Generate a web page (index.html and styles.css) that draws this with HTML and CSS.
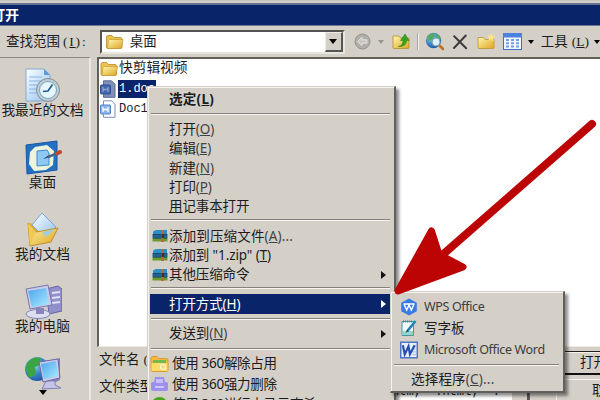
FILE: index.html
```html
<!DOCTYPE html>
<html lang="zh-CN">
<head>
    <meta charset="UTF-8">
    <title>打开</title>
    <link rel="stylesheet" href="styles.css">
</head>
<body>
    <svg class="defs" width="0" height="0">
        <defs>
            <linearGradient id="gold" x1="0" y1="0" x2="1" y2="1">
                <stop offset="0" stop-color="#fff7b0"/>
                <stop offset="1" stop-color="#dfa51e"/>
            </linearGradient>
            <linearGradient id="screen" x1="0" y1="0" x2="1" y2="1">
                <stop offset="0" stop-color="#4ba5ec"/>
                <stop offset="1" stop-color="#aaeaff"/>
            </linearGradient>
            <linearGradient id="paper" x1="0" y1="0" x2="1" y2="1">
                <stop offset="0" stop-color="#ffffff"/>
                <stop offset="1" stop-color="#8fc0ee"/>
            </linearGradient>
            <radialGradient id="earth" cx=".35" cy=".3" r=".8">
                <stop offset="0" stop-color="#a9e6d8"/>
                <stop offset=".5" stop-color="#3e8bd0"/>
                <stop offset="1" stop-color="#174a9c"/>
            </radialGradient>
        </defs>
        <symbol id="folder" viewBox="0 0 18 16">
            <path d="M1 13V3q0-1.500 1.500-1.500h4L8.500 3.500H15q1.500 0 1.500 1.500v8q0 1.500-1.500 1.500H2.500Q1 14.500 1 13z" fill="#eec34a" stroke="#b48a2c" stroke-width=".8"/>
            <path d="M3 6.500Q3.200 5.500 4.500 5.500h13L16 13.500q-.2 1-1.500 1H2z" fill="url(#gold)" stroke="#c59a33" stroke-width=".7"/>
        </symbol>
        <symbol id="doc" viewBox="0 0 16 18">
            <path d="M3.500.8h8L15 4.300v13H3.500z" fill="#fff" stroke="#7d90b8"/>
            <rect x=".5" y="5" width="10" height="9" rx="1" fill="#8db5ee" stroke="#4f82cf"/>
            <path d="M3 7v5M8 7v5M3 9.500h5" stroke="#fff" stroke-width="1.300" fill="none"/>
        </symbol>
        <symbol id="doc-selected" viewBox="0 0 16 18">
            <path d="M3.500.8h8L15 4.300v13H3.500z" fill="#8090b8" stroke="#5a6b98"/>
            <rect x=".5" y="5" width="10" height="9" rx="1" fill="#4666ad" stroke="#2f4f9a"/>
            <path d="M3 7v5M8 7v5M3 9.500h5" stroke="#8fa3d0" stroke-width="1.300" fill="none"/>
        </symbol>
        <symbol id="archive" viewBox="0 0 16 14">
            <path d="M1 2.500L4 1h11v4H1z" fill="#2b8fc4"/>
            <path d="M.5 5h15v4H.5z" fill="#25608f"/>
            <path d="M.5 9h15v3.500H.5z" fill="#6b9b2c"/>
            <path d="M1 5.500h14M1 9.300h14" stroke="#164566" stroke-width=".8"/>
            <path d="M9 1h3v12H9z" fill="#b56a38"/>
            <path d="M9.500 5h2.500v4H9.500z" fill="#4a2d20"/>
        </symbol>
    </svg>

    <div class="window">
        <div class="titlebar">打开</div>

        <div class="toolbar">
            <span class="look-in">查找范围<span class="key">(<u>I</u>):</span></span>
            <div class="combo">
                <svg width="19" height="16"><use href="#folder"/></svg>
                <span class="combo-text">桌面</span>
                <span class="combo-button"><i class="down"></i></span>
            </div>
            <div class="tools">
                <svg class="back" width="17" height="17" viewBox="0 0 17 17">
                    <circle cx="8.500" cy="8.500" r="7.500" fill="#b0aeaa" stroke="#95938f"/>
                    <path d="M3.500 8.500L8 4.300v2.500h5v3.400H8v2.500z" fill="#c8c5bf" stroke="#f0eee9" stroke-width=".8"/>
                </svg>
                <i class="down small grey"></i>
                <svg class="up" width="18" height="17" viewBox="0 0 18 17">
                    <path d="M1 14.500V3h6l1.500 2H17v9.500q0 1-1 1H2q-1 0-1-1z" fill="url(#gold)" stroke="#b68a28" stroke-width=".8"/>
                    <path d="M6 13.500q5-.5 5-6H8.500L13 1l4 6.500h-2.500q0 6.500-8.500 6z" fill="#34a322" stroke="#23801a" stroke-width=".5"/>
                </svg>
                <i class="divider"></i>
                <svg class="globe" width="20" height="19" viewBox="0 0 20 19">
                    <circle cx="8.500" cy="8.500" r="7.700" fill="url(#earth)"/>
                    <path d="M2 5q3-4.500 7-4l1 3-3 4-4 1zM12 2q3 1 4 5l-3 1-2-3z" fill="#54a968"/>
                    <path d="M14 13l4 4" stroke="#b8722e" stroke-width="2.600" stroke-linecap="round"/>
                    <circle cx="11" cy="10" r="4" fill="#d8f1fb" stroke="#7796ad" stroke-width="1.200"/>
                </svg>
                <svg class="delete" width="16" height="16" viewBox="0 0 16 16">
                    <path d="M2.200 2.200l12 12M13.800 1.500L2 14" stroke="#3d3d3d" stroke-width="2" fill="none" stroke-linecap="round"/>
                </svg>
                <svg class="new-folder" width="19" height="17" viewBox="0 0 19 17">
                    <path d="M1 14.500V4.500h5.500L8 6.500h9v8q0 1-1 1H2q-1 0-1-1z" fill="url(#gold)" stroke="#c0932c" stroke-width=".8"/>
                    <path d="M14.500 0l1 3 3.200.6-2.600 1.600.4 3.300-2.200-2-3 1.200 1-3-2-2.300 3.200.2z" fill="#ffe67c"/>
                </svg>
                <svg class="views" width="19" height="17" viewBox="0 0 19 17">
                    <rect x=".5" y=".5" width="18" height="16" fill="#f3f8ff" stroke="#3e6dc2"/>
                    <path d="M0 0h19v4.500H0z" fill="#4b82dd"/>
                    <path d="M3 7h3M8 7h3M13 7h3M3 10.300h3M8 10.300h3M13 10.300h3M3 13.600h3M8 13.600h3M13 13.600h3" stroke="#73a0e4" stroke-width="2"/>
                </svg>
                <i class="down small"></i>
                <span class="tool-text">工具<span class="key">(<u>L</u>)</span></span>
                <i class="down small"></i>
            </div>
        </div>

        <div class="main">
            <div class="places">
                <div class="place">
                    <svg width="38" height="36" viewBox="0 0 38 36">
                        <path d="M2 1h18l6 6v26H2z" fill="url(#paper)" stroke="#84abd4"/>
                        <path d="M20 1v6h6" fill="#5b9bdb"/>
                        <path d="M5 9h13M5 13h13M5 17h10M5 21h8M5 25h7" stroke="#86b5e6"/>
                        <circle cx="24" cy="22" r="11.500" fill="#c3cad0" stroke="#818e98"/>
                        <circle cx="24" cy="22" r="8.500" fill="#e5f6fc" stroke="#72a8c6"/>
                        <path d="M28.500 16.500L24 23l-5 .5" stroke="#1f5d87" stroke-width="1.700" fill="none"/>
                    </svg>
                    <span>我最近的文档</span>
                </div>
                <div class="place">
                    <svg width="38" height="36" viewBox="0 0 38 36">
                        <path d="M2 5l31-4v29L3 34z" fill="#2370c2" stroke="#1758a2"/>
                        <path d="M11 7l12-2 7 6-1 14-7 5-12 1-5-7 1-12z" fill="#eef4dc"/>
                        <path d="M13 11l10-1 2 3v12l-12 1z" fill="#8fc8f3" stroke="#3e8bce"/>
                        <path d="M19 19l6-4 2 2z" fill="#274a73"/>
                        <path d="M24 17l10-4" stroke="#46658f" stroke-width="2.500"/>
                        <path d="M33 13.500l3-1.500" stroke="#ba4930" stroke-width="4" stroke-linecap="round"/>
                    </svg>
                    <span>桌面</span>
                </div>
                <div class="place">
                    <svg width="38" height="36" viewBox="0 0 38 36">
                        <path d="M4 11l8 1 8-5 12 8-4 13L6 34z" fill="#e2ad36"/>
                        <path d="M18 1l14 14-12 10L8 13z" fill="url(#paper)" stroke="#7ca9d1"/>
                        <path d="M4 11l8 9 22-4-7 14-21 4z" fill="url(#gold)" stroke="#c18f28"/>
                        <path d="M4 11l2 23 6-14z" fill="#f4c957"/>
                        <path d="M18 20l13-3-9 8z" fill="#9ecdde"/>
                    </svg>
                    <span>我的文档</span>
                </div>
                <div class="place">
                    <svg width="38" height="36" viewBox="0 0 38 36">
                        <path d="M22 5l12-3 4 3v22l-13 3z" fill="#9290c9" stroke="#6765a2"/>
                        <path d="M28 9l8-1M28 14l8-1M28 19l8-1" stroke="#e3e2fb" stroke-width="2"/>
                        <ellipse cx="14" cy="30" rx="12" ry="4.500" fill="#dddff1" stroke="#8284b6"/>
                        <path d="M12 24h8v6h-8z" fill="#8885bd"/>
                        <path d="M2 5l22-4 4 20-22 4z" fill="#cacae9" stroke="#7877b3"/>
                        <path d="M4 7l18-3 3 16-17 3z" fill="url(#screen)"/>
                    </svg>
                    <span>我的电脑</span>
                </div>
                <div class="place">
                    <svg width="38" height="34" viewBox="0 0 38 34">
                        <circle cx="13" cy="13" r="12" fill="url(#earth)"/>
                        <path d="M3 7Q9 0 17 2l-1 7-5 2 1 7-6 4Q0 16 3 7z" fill="#3ba545"/>
                        <path d="M28 4l8-2v22l-8 4z" fill="#8583bc"/>
                        <path d="M22 25h9v4l6 3-19 1z" fill="#c5c6e6" stroke="#8281b4"/>
                        <path d="M15 6l19-3 2 19-17 4z" fill="#cacae9" stroke="#6867a1"/>
                        <path d="M17 8l15-3 2 15-14 3z" fill="url(#screen)"/>
                    </svg>
                </div>
                <i class="down places-more"></i>
            </div>

            <div class="content">
                <div class="files">
                    <div class="file"><svg width="18" height="16"><use href="#folder"/></svg><span>快剪辑视频</span></div>
                    <div class="file selected"><svg width="16" height="18"><use href="#doc-selected"/></svg><span>1.doc</span></div>
                    <div class="file"><svg width="16" height="18"><use href="#doc"/></svg><span>Doc1</span></div>
                </div>
                <div class="fields">
                    <div class="labels">
                        <span>文件名<span class="key"> (</span></span>
                        <span>文件类型</span>
                    </div>
                    <div class="inputs">
                        <div class="input"></div>
                        <div class="input types">*.htm; *.html; *.<b></b></div>
                    </div>
                    <div class="buttons">
                        <div class="button default">打开</div>
                        <div class="button">取消</div>
                    </div>
                </div>
            </div>
        </div>
    </div>

    <div class="menu context">
        <div class="item bold">选定(<u>L</u>)</div>
        <hr>
        <div class="item">打开<span class="hot">(<u>O</u>)</span></div>
        <div class="item">编辑<span class="hot">(<u>E</u>)</span></div>
        <div class="item">新建<span class="hot">(<u>N</u>)</span></div>
        <div class="item">打印<span class="hot">(<u>P</u>)</span></div>
        <div class="item"><u>用</u>记事本打开</div>
        <hr>
        <div class="item wide"><svg width="16" height="14"><use href="#archive"/></svg>添加到压缩文件<span class="hot">(<u>A</u>)...</span></div>
        <div class="item"><svg width="16" height="14"><use href="#archive"/></svg>添加到 "1.zip" (<u>T</u>)</div>
        <div class="item"><svg width="16" height="14"><use href="#archive"/></svg>其他压缩命令<i class="more"></i></div>
        <hr>
        <div class="item active">打开方式(<u>H</u>)<i class="more"></i></div>
        <hr class="tight">
        <div class="item send">发送到<span class="hot">(<u>N</u>)</span><i class="more"></i></div>
        <hr class="tight">
        <div class="item tall">
            <svg width="19" height="18" viewBox="0 0 19 18">
                <path d="M1 15V3q0-1.500 1.500-1.500H7l2 2h7.500Q18 3.500 18 5v10q0 1.500-1.500 1.500h-14Q1 16.500 1 15z" fill="#f2b840" stroke="#dc9b2c"/>
                <path d="M3 5h13v4H3z" fill="#79b84a"/>
                <path d="M1.500 8h16v8h-16z" fill="#ffdb69"/>
                <circle cx="13" cy="12" r="2.500" fill="none" stroke="#fff8d8" stroke-width="1.200"/>
            </svg>使用 360解除占用
        </div>
        <div class="item tall">
            <svg width="19" height="16" viewBox="0 0 19 16">
                <path d="M5 1h9l1 5h1.500q1.500 0 1.500 1.500V13q0 2-2 2H3q-2 0-2-2V7.500Q1 6 2.500 6H4z" fill="#9b91ec"/>
                <path d="M6 3h7v4H6z" fill="#c5bffc"/>
                <path d="M5 11h9" stroke="#ded9ff" stroke-width="1.500"/>
            </svg>使用 360强力删除
        </div>
        <div class="item tall">
            <svg width="19" height="18" viewBox="0 0 19 18">
                <circle cx="9.500" cy="9" r="8" fill="#45a51c"/>
                <path d="M3 8q6-6 13-2-6-1-9 3z" fill="#f3dd33"/>
            </svg>使用 360进行木马云查杀
        </div>
    </div>

    <div class="menu submenu">
        <div class="item">
            <svg width="18" height="18" viewBox="0 0 18 18">
                <path d="M9 .5l7.800 4.200v8.600L9 17.500 1.200 13.300V4.700z" fill="#397be3"/>
                <path d="M3.500 6h11M4 6.300l2.700 5.700L9 7l2.300 5L14 6.300" fill="none" stroke="#fff" stroke-width="1.400"/>
            </svg><span class="latin">WPS Office</span>
        </div>
        <div class="item">
            <svg width="18" height="18" viewBox="0 0 18 18">
                <path d="M2 2.500h11.500v14H2z" fill="#eefafa" stroke="#4795a6"/>
                <path d="M3 12h10v4H3z" fill="#94d6cb"/>
                <path d="M3 2.500h10" stroke="#537889" stroke-width="2" stroke-dasharray="1 1"/>
                <path d="M15.500 2L7 12.500" stroke="#267eb4" stroke-width="2.500"/>
                <path d="M7.500 10.500L5.500 14l3.300-2z" fill="#345"/>
            </svg>写字板
        </div>
        <div class="item">
            <svg width="19" height="18" viewBox="0 0 19 18">
                <rect x=".8" y=".8" width="17.400" height="16.400" fill="#e8effb" stroke="#4770c3" stroke-width="1.500"/>
                <path d="M13 5h4M13 8h4M13 11h4M13 14h4" stroke="#9eb8e2"/>
                <path d="M3 4l2 9.500L9 5l1.500 8.500L15.500 4" fill="none" stroke="#2850aa" stroke-width="2.300"/>
            </svg><span class="latin">Microsoft Office Word</span>
        </div>
        <hr>
        <div class="item choose">选择程序<span class="hot">(<u>C</u>)...</span></div>
    </div>

    <svg class="arrow" width="210" height="190" viewBox="0 0 210 190">
        <path d="M202 14L50 147" stroke="#bd0405" stroke-width="8" stroke-linecap="round"/>
        <path d="M8 181L41.500 121 49 144.500 73 157z" fill="#bd0405" stroke="#bd0405" stroke-width="7" stroke-linejoin="round"/>
    </svg>
</body>
</html>
```
FILE: styles.css
```css
body {
    margin: 0;
    width: 600px;
    height: 400px;
    overflow: hidden;
    position: relative;
    background: #d4d0c8;
    color: #1c1c1c;
    font-family: "Liberation Sans", "Noto Sans CJK SC", sans-serif;
    font-size: 13.5px;
    line-height: 20px;
    white-space: nowrap;
}
svg {
    flex: none;
}
.defs {
    position: absolute;
}
u {
    text-underline-offset: 1px;
    text-decoration-thickness: 1px;
}
.window {
    width: 600px;
    height: 400px;
    box-sizing: border-box;
    padding-top: 2px;
    border-top: 1px solid #c8c5be;
    display: flex;
    flex-direction: column;
    overflow: hidden;
}
.titlebar {
    height: 20px;
    flex: none;
    border-top: 2px solid #667294;
    border-bottom: 1px solid #6d7898;
    background: #0a246a;
    color: #fff;
    font-weight: bold;
    font-size: 14px;
    line-height: 20px;
    text-indent: -9px;
}
.toolbar {
    height: 31px;
    flex: none;
    display: flex;
    align-items: center;
    padding-left: 6px;
}
.look-in {
    width: 94px;
}
.key {
    font-family: "Liberation Serif", serif;
    letter-spacing: 0.5px;
}
.look-in .key {
    margin-left: 3px;
    letter-spacing: 1.8px;
}
.combo {
    width: 246px;
    height: 24px;
    box-sizing: border-box;
    border: 2px solid #55534f;
    border-right-color: #e8e5df;
    border-bottom-color: #e8e5df;
    background: #fff;
    display: flex;
    align-items: center;
    padding-left: 3px;
}
.combo-text {
    flex: 1;
    margin-left: 6px;
}
.combo-button {
    width: 15px;
    height: 17px;
    background: #d4d0c8;
    border: 1px solid #eeebe5;
    border-right: 2px solid #555;
    border-bottom: 2px solid #555;
    display: flex;
    align-items: center;
    justify-content: center;
}
.down {
    border: 4px solid transparent;
    border-top: 5px solid #000;
    border-bottom: 0;
}
.down.small {
    border-width: 4px 3px 0;
}
.down.grey {
    border-top-color: #969490;
}
.tools {
    display: flex;
    align-items: center;
    margin-left: 9px;
}
.back {
    margin-right: 7px;
}
.up {
    margin-left: 8px;
}
.divider {
    width: 1px;
    height: 17px;
    background: #aaa8a3;
    border-right: 1px solid #f2f0eb;
    margin: 0 6px 0 7px;
}
.delete {
    margin-left: 7px;
}
.new-folder {
    margin-left: 9px;
}
.views {
    margin: 0 6px 0 7px;
}
.tool-text {
    margin: 0 5px 0 7px;
}
.tool-text .key {
    margin-left: 4px;
    letter-spacing: 0;
}
.main {
    flex: 1;
    display: flex;
    min-height: 0;
}
.places {
    width: 91px;
    flex: none;
    box-sizing: border-box;
    border-top: 1px solid #8c8982;
    border-right: 2px solid #ece9e3;
    padding: 10px 4px 0 0;
    display: flex;
    flex-direction: column;
    align-items: center;
    position: relative;
}
.place {
    width: 84px;
    height: 72px;
    flex: none;
    display: flex;
    flex-direction: column;
    align-items: center;
}
.place svg {
    margin-bottom: -3px;
}
.place span {
    font-size: 13.7px;
}
.places-more {
    position: absolute;
    left: 39px;
    bottom: 5px;
}
.content {
    flex: 1;
    min-width: 0;
    margin-left: 6px;
}
.files {
    height: 290px;
    box-sizing: border-box;
    border-top: 2px solid #62605b;
    border-left: 2px solid #62605b;
    border-bottom: 1px solid #eeebe5;
    background: #fff;
    padding-left: 1px;
}
.file {
    height: 20px;
    display: flex;
    align-items: center;
}
.file span {
    font-family: "Liberation Mono", "Noto Sans CJK SC", monospace;
    font-size: 12px;
    margin-left: 3px;
}
.file:first-child span {
    font-size: 13.7px;
    margin-left: 1px;
}
.selected span {
    height: 18px;
    line-height: 18px;
    width: 37px;
    margin-left: 2px;
    padding-left: 1px;
    background: #0a246a;
    color: #fff;
    overflow: hidden;
}
.fields {
    display: flex;
    padding-left: 2px;
}
.labels {
    width: 100px;
    flex: none;
    padding-top: 3px;
    display: flex;
    flex-direction: column;
    gap: 7px;
}
.inputs {
    width: 331px;
    flex: none;
    padding-top: 8px;
}
.input {
    height: 20px;
    background: #fff;
    border: 1px solid #666;
    margin-bottom: 5px;
}
.input.types {
    display: flex;
    justify-content: flex-end;
    font-family: "Liberation Mono", monospace;
    font-size: 12px;
    line-height: 18px;
}
.input b {
    width: 15px;
    height: 17px;
    margin-left: 12px;
    background: #d4d0c8;
    border-right: 2px solid #555;
    border-bottom: 2px solid #555;
}
.buttons {
    flex: none;
    padding: 4px 0 0 26px;
}
.button {
    width: 75px;
    height: 21px;
    border: 1px solid #f5f3ee;
    border-bottom: 2px solid #55534f;
    line-height: 21px;
    text-indent: 35px;
    margin-top: 4px;
}
.button.default {
    border-top: 1px solid #222;
    border-bottom: 2px solid #111;
    box-shadow: inset 0 1px #f5f3ee;
    margin-top: 0;
    text-indent: 23px;
}
.menu {
    position: absolute;
    box-sizing: border-box;
    background: #d4d0c8;
    border: 1px solid #d4d0c8;
    border-right: 2px solid #62605c;
    border-bottom: 2px solid #62605c;
    box-shadow: inset 1px 1px #f6f4f0, 3px 3px 3px rgba(0, 0, 0, 0.45);
    font-family: "Noto Sans", "Noto Sans CJK SC", sans-serif;
    font-size: 13.5px;
}
.context {
    left: 147px;
    top: 86px;
    width: 249px;
    height: 330px;
    padding: 2px 3px 0 2px;
}
.item {
    height: 19.3px;
    line-height: 19px;
    padding-left: 19px;
    display: flex;
    align-items: center;
    white-space: pre;
}
.item svg {
    margin: 0 1px 0 -17px;
}
.context .item {
    letter-spacing: -0.1px;
}
.context .item.wide {
    letter-spacing: 0.15px;
}
.hot {
    color: #444;
}
.item.bold {
    font-weight: bold;
    height: 21px;
}
.context .item.bold {
    letter-spacing: 0.3px;
}
.item.active {
    background: #0a246a;
    color: #fff;
}
.item.send {
    height: 20px;
}
.item.tall {
    height: 20.5px;
    white-space: nowrap;
}
.context .item.tall {
    letter-spacing: -0.3px;
}
.item.tall svg {
    margin: 0 3px 0 -19px;
}
.submenu .item {
    white-space: nowrap;
}
.more {
    margin-left: auto;
    margin-right: 5px;
    border: 4px solid transparent;
    border-left: 5px solid #111;
    border-right: 0;
}
.active .more {
    border-left-color: #fff;
}
.menu hr {
    height: 1px;
    margin: 3px 1px 5px;
    border: 0;
    border-top: 1px solid #85827c;
    background: #f8f6f2;
}
.menu hr.tight {
    margin: 4px 1px 4px;
}
.submenu {
    left: 390px;
    top: 291px;
    width: 175px;
    height: 102px;
    padding: 4px 3px 0 2px;
}
.submenu .item {
    height: 21.5px;
    padding-left: 31px;
}
.submenu .item svg {
    width: 18px;
    margin: 0 6px 0 -24px;
}
.submenu hr {
    margin: 3px 1px 4px;
}
.submenu .choose {
    height: 19px;
    padding-left: 18px;
    letter-spacing: 0.2px;
}
.latin {
    font-size: 12.5px;
    color: #3c3c3c;
    letter-spacing: -0.35px;
}
.arrow {
    position: absolute;
    left: 390px;
    top: 110px;
}
```
